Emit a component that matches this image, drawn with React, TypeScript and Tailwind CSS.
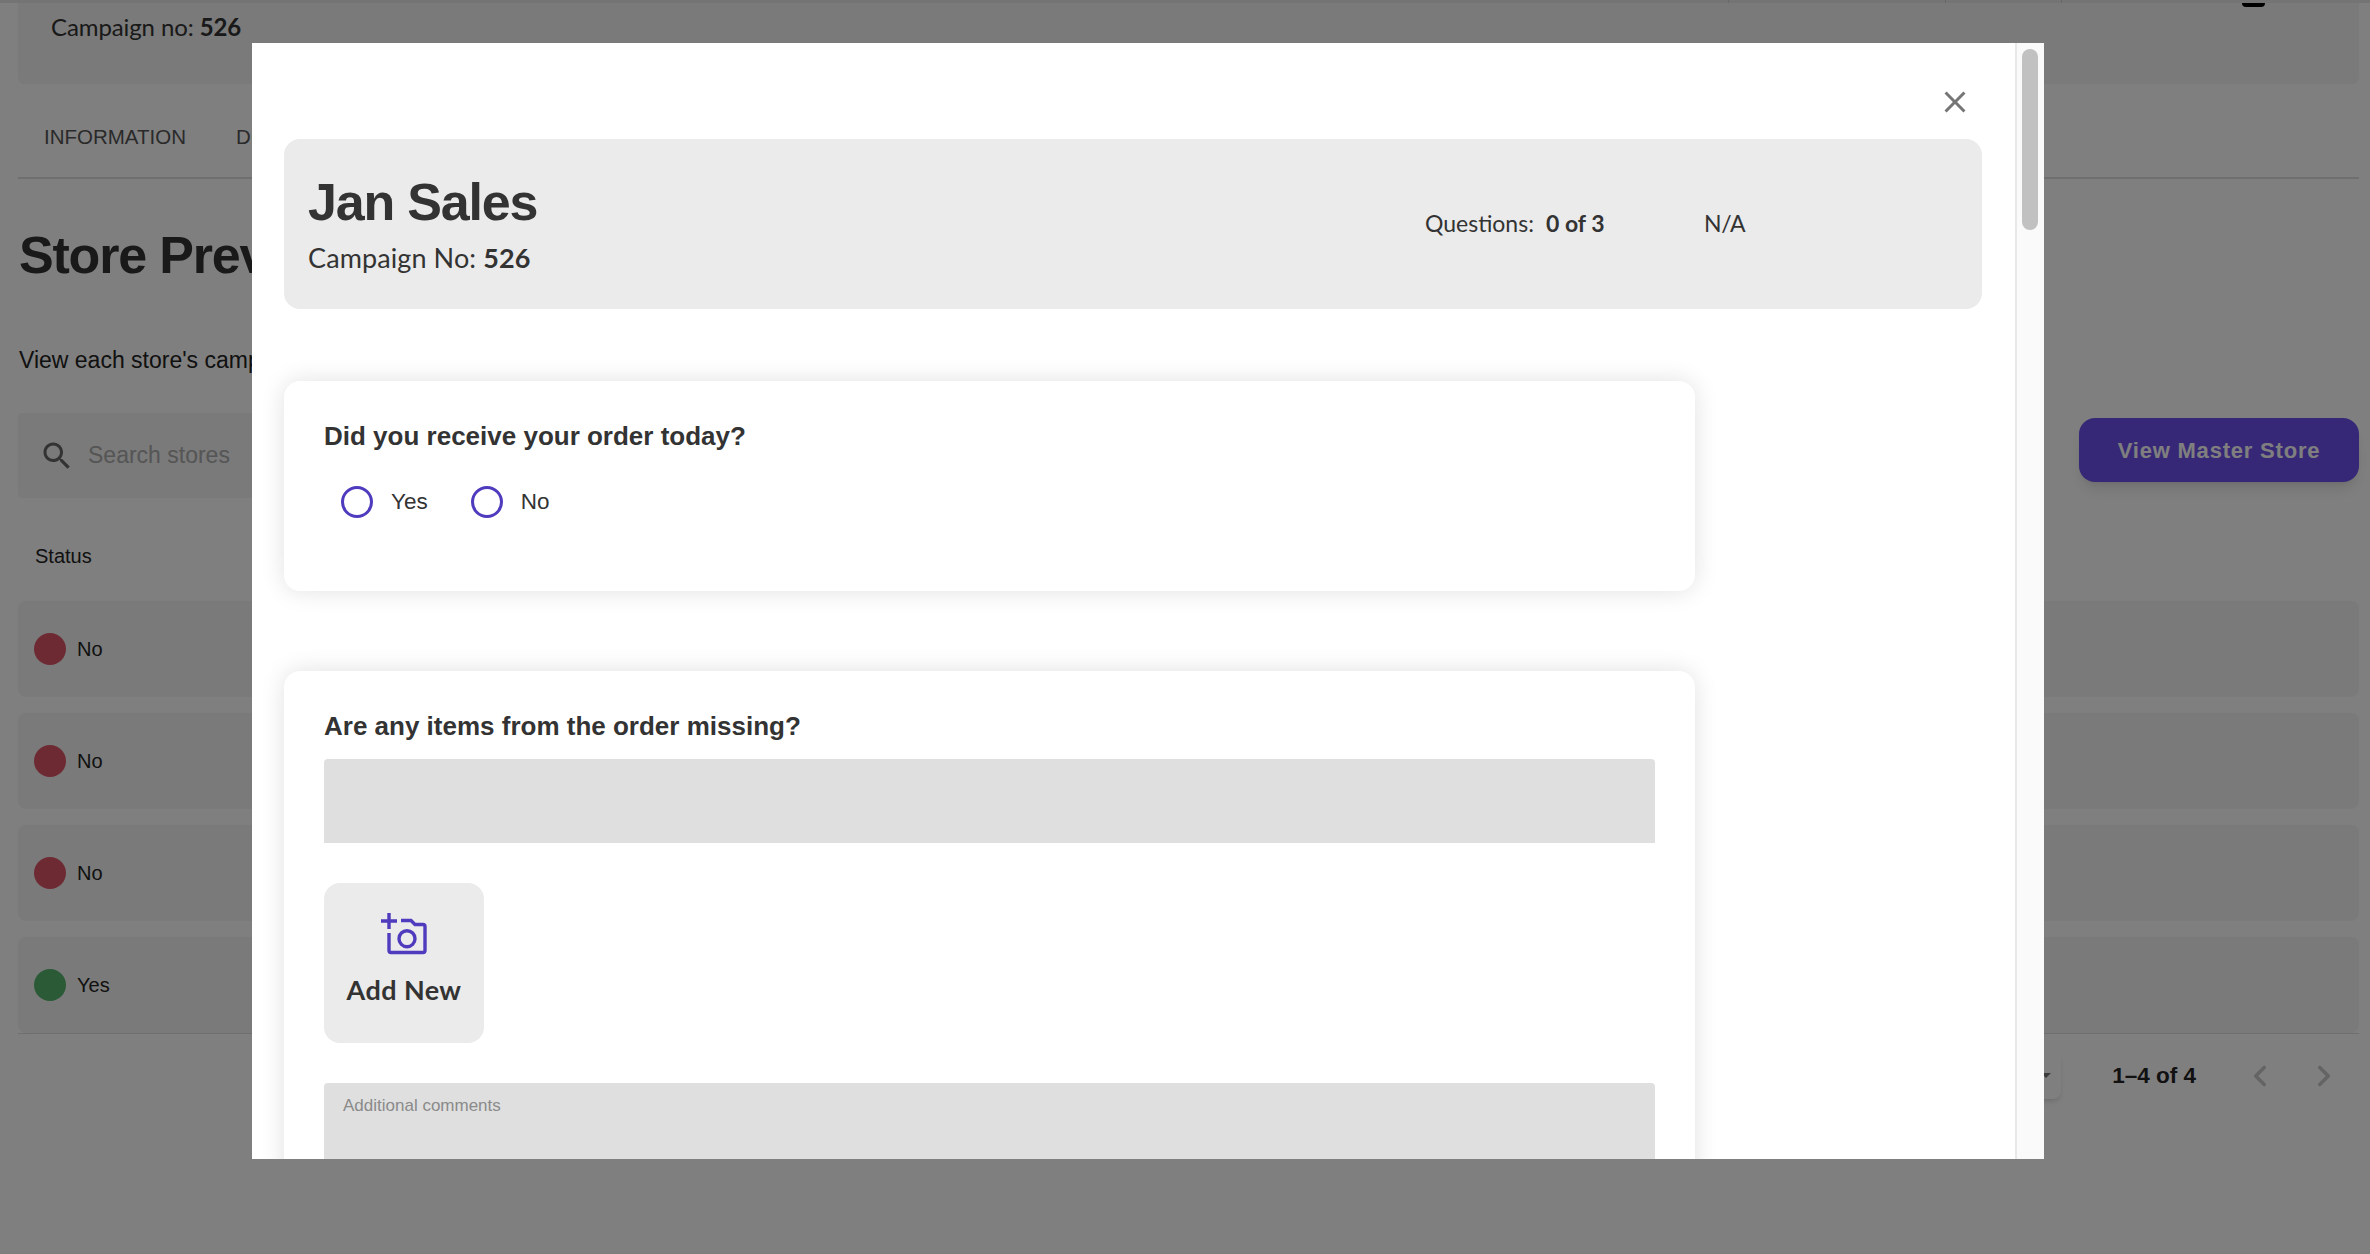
import { ChevronLeft, ChevronRight } from "lucide-react";

const rows = [
  { label: "No", dot: "bg-[#dc5466]" },
  { label: "No", dot: "bg-[#dc5466]" },
  { label: "No", dot: "bg-[#dc5466]" },
  { label: "Yes", dot: "bg-[#56b46e]" },
];

function Radio({ label }: { label: string }) {
  return (
    <div className="flex items-center gap-[18px]">
      <span className="h-[32px] w-[32px] rounded-full border-[3.5px] border-[#4e3bbd]" />
      <span className="text-[22.5px] text-[#333333]">{label}</span>
    </div>
  );
}

function AddPhotoIcon() {
  return (
    <svg width="46" height="42" viewBox="0 0 46 42" fill="none" stroke="#4e3bbd" strokeWidth="3.4">
      <path d="M0 8h16M8 0v16" />
      <path d="M8 20v17.5a2 2 0 0 0 2 2h32a2 2 0 0 0 2-2V13.5a2 2 0 0 0-2-2h-8l-4-4H20" />
      <circle cx="26" cy="25.7" r="8" />
    </svg>
  );
}

function Background() {
  return (
    <div className="flex h-full flex-col text-[#222222]">
      <div className="flex h-[3px] bg-[#e8e8e8]">
        <div className="w-[1729px] border-r border-[#d0d0d0]" />
        <div className="w-[217px] border-r border-[#d0d0d0]" />
        <div className="w-[116px] border-r border-[#d0d0d0]" />
      </div>
      <div className="relative ml-[18px] mr-[11px] h-[81px] rounded-b-md bg-[#f4f4f4] pl-[33px] pt-[8px] font-['Lato',sans-serif] text-[24px] leading-[32px] tracking-[-0.1px] text-[#333333]">
        Campaign no: <b>526</b>
        <span className="absolute left-[2224px] top-0 h-[4px] w-[23px] rounded-b bg-black" />
      </div>
      <div className="ml-[18px] mr-[11px] flex h-[95px] items-center gap-[50px] border-b-2 border-[#dedede] pl-[26px] pt-[14px] text-[20.5px] text-[#555555]">
        <span>INFORMATION</span>
        <span>DETAILS</span>
      </div>
      <h1 className="ml-[19px] mt-[44px] text-[52px] font-bold leading-[64px] tracking-[-1.2px] text-[#333333]">Store Preview</h1>
      <p className="ml-[19px] mt-[57px] text-[23px] leading-[32px]">View each store's campaign</p>
      <div className="ml-[18px] mr-[11px] mt-[37px] flex items-start justify-between">
        <div className="flex h-[85px] w-[600px] items-center gap-[13px] rounded bg-[#f4f4f4] pl-[21px] text-[23px] text-[#aaaaaa]">
          <svg width="36" height="36" viewBox="0 0 24 24" fill="#666666">
            <path d="M15.5 14h-.79l-.28-.27C15.41 12.59 16 11.11 16 9.5 16 5.91 13.09 3 9.5 3S3 5.91 3 9.5 5.91 16 9.5 16c1.61 0 3.09-.59 4.23-1.57l.27.28v.79l5 4.99L20.49 19l-4.99-5zm-6 0C7.01 14 5 11.99 5 9.5S7.01 5 9.5 5 14 7.01 14 9.5 11.99 14 9.5 14z" />
          </svg>
          Search stores
        </div>
        <div className="mt-[5px] flex h-[64px] w-[280px] items-center justify-center rounded-[16px] bg-[#6e50ee] text-[22px] font-bold tracking-[0.8px] text-white shadow-lg">
          View Master Store
        </div>
      </div>
      <div className="ml-[35px] mt-[45px] text-[20px] leading-[26px]">Status</div>
      <div className="ml-[18px] mr-[11px] mt-[32px] flex flex-col gap-[16px] border-b border-[#dedede]">
        {rows.map((r, i) => (
          <div key={i} className="flex h-[96px] items-center gap-[11px] rounded-lg bg-[#f4f4f4] pl-[16px] text-[20px]">
            <span className={`h-[32px] w-[32px] rounded-full ${r.dot}`} />
            {r.label}
          </div>
        ))}
      </div>
      <div className="mr-[29px] mt-[18px] flex items-center justify-end">
        <div className="mr-[51px] flex h-[47px] w-[60px] items-center justify-end rounded-lg bg-white pr-[10px] shadow-md">
          <span className="h-0 w-0 border-x-[5px] border-t-[5px] border-x-transparent border-t-[#777777]" />
        </div>
        <span className="text-[22.5px] font-bold text-[#222222]">1–4 of 4</span>
        <ChevronLeft className="ml-[47px] text-[#c8c8c8]" size={34} strokeWidth={2.5} />
        <ChevronRight className="ml-[30px] text-[#c8c8c8]" size={34} strokeWidth={2.5} />
      </div>
    </div>
  );
}

export default function App() {
  return (
    <div className="relative h-screen w-full overflow-hidden bg-white font-['Liberation_Sans',sans-serif]">
      <Background />
      <div className="absolute inset-0 bg-black/50" />

      <div className="absolute left-[252px] top-[43px] flex h-[1116px] w-[1792px] overflow-hidden bg-white">
        <div className="flex-1 pl-[32px] pr-[33px]">
          <div className="flex h-[96px] items-center justify-end pr-[9px] pt-[22px]">
            <svg width="36" height="36" viewBox="0 0 24 24" fill="#757575">
              <path d="M19 6.41 17.59 5 12 10.59 6.41 5 5 6.41 10.59 12 5 17.59 6.41 19 12 13.41 17.59 19 19 17.59 13.41 12z" />
            </svg>
          </div>

          <div className="flex h-[170px] items-start rounded-[16px] bg-[#ebebeb] pl-[24px] pt-[33px] text-[#333333]">
            <div className="w-[1117px]">
              <div className="text-[52px] font-bold leading-[60px] tracking-[-1.2px]">Jan Sales</div>
              <div className="mt-[9px] font-['Lato',sans-serif] text-[27px] leading-[34px] tracking-[0.1px]">
                Campaign No: <b>526</b>
              </div>
            </div>
            <div className="mt-[36px] flex font-['Lato',sans-serif] text-[23px] leading-[30px]">
              <span className="w-[121px]">Questions:</span>
              <b className="w-[158px]">0 of 3</b>
              <span className="tracking-[-0.3px]">N/A</span>
            </div>
          </div>

          <div className="mt-[72px] h-[210px] w-[1411px] rounded-[16px] bg-white px-[40px] pt-[38px] shadow-[0_0_24px_rgba(0,0,0,0.12)]">
            <div className="text-[26px] font-bold leading-[34px] text-[#333333]">Did you receive your order today?</div>
            <div className="mt-[32px] flex gap-[43px] pl-[17px]">
              <Radio label="Yes" />
              <Radio label="No" />
            </div>
          </div>

          <div className="mt-[80px] w-[1411px] rounded-[16px] bg-white px-[40px] pb-[40px] pt-[38px] shadow-[0_0_24px_rgba(0,0,0,0.12)]">
            <div className="text-[26px] font-bold leading-[34px] text-[#333333]">Are any items from the order missing?</div>
            <div className="mt-[16px] h-[84px] rounded-t bg-[#dfdfdf]" />
            <div className="mt-[40px] flex h-[160px] w-[160px] flex-col items-center rounded-[16px] bg-[#ebebeb] pt-[30px]">
              <AddPhotoIcon />
              <span className="mt-[18px] font-['Lato',sans-serif] text-[27px] font-bold leading-[34px] tracking-[0.4px] text-[#333333]">Add New</span>
            </div>
            <div className="mt-[40px] h-[200px] rounded-t bg-[#dfdfdf] px-[19px] pt-[13px] text-[17px] leading-[20px] text-[#8a8a8a]">
              Additional comments
            </div>
          </div>
        </div>

        <div className="w-[29px] shrink-0 border-l-2 border-[#e8e8e8] bg-[#fafafa] pl-[5px] pt-[6px]">
          <div className="h-[181px] w-[16px] rounded-full bg-[#c1c1c1]" />
        </div>
      </div>
    </div>
  );
}
